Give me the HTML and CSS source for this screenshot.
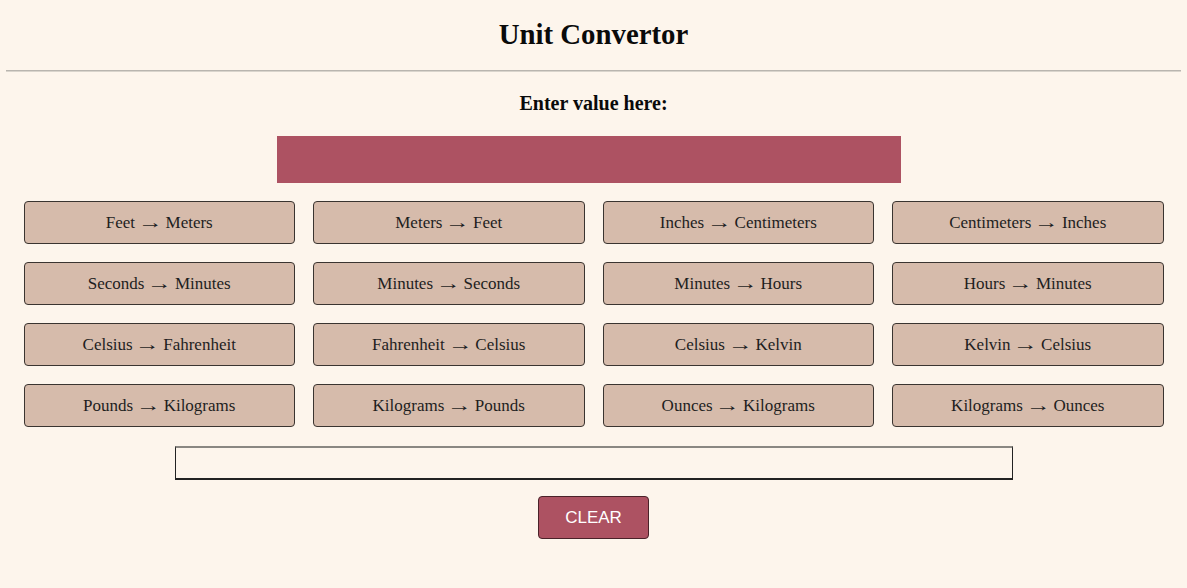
FILE: index.html
```html
<!DOCTYPE html>
<html>
<head>
<meta charset="utf-8">
<title>Unit Convertor</title>
<link rel="stylesheet" href="styles.css">
</head>
<body>
  <h1 class="title">Unit Convertor</h1>
  <hr class="divider">
  <main class="converter">
    <label class="prompt" for="value">Enter value here:</label>
    <input class="value-input" id="value" type="text">
    <div class="grid">
      <button class="conv">Feet <span class="arr">→</span> Meters</button>
      <button class="conv">Meters <span class="arr">→</span> Feet</button>
      <button class="conv">Inches <span class="arr">→</span> Centimeters</button>
      <button class="conv">Centimeters <span class="arr">→</span> Inches</button>
      <button class="conv">Seconds <span class="arr">→</span> Minutes</button>
      <button class="conv">Minutes <span class="arr">→</span> Seconds</button>
      <button class="conv">Minutes <span class="arr">→</span> Hours</button>
      <button class="conv">Hours <span class="arr">→</span> Minutes</button>
      <button class="conv">Celsius <span class="arr">→</span> Fahrenheit</button>
      <button class="conv">Fahrenheit <span class="arr">→</span> Celsius</button>
      <button class="conv">Celsius <span class="arr">→</span> Kelvin</button>
      <button class="conv">Kelvin <span class="arr">→</span> Celsius</button>
      <button class="conv">Pounds <span class="arr">→</span> Kilograms</button>
      <button class="conv">Kilograms <span class="arr">→</span> Pounds</button>
      <button class="conv">Ounces <span class="arr">→</span> Kilograms</button>
      <button class="conv">Kilograms <span class="arr">→</span> Ounces</button>
    </div>
    <div class="output"></div>
    <button class="clear">CLEAR</button>
  </main>
</body>
</html>
```
FILE: styles.css
```css
html, body {
  margin: 0;
  background: #fdf5ec;
}
body {
  padding: 0 6px;
  font-family: "Liberation Serif", "Times New Roman", serif;
  color: #0a0a0a;
}
.title {
  margin: 18px 0 20px;
  font-size: 28.8px;
  line-height: 32px;
  font-weight: bold;
  text-align: center;
}
.divider {
  margin: 0;
  height: 0;
  border: none;
  border-top: 1px solid #b9b5af;
  border-bottom: 1px solid #d9d4cc;
}
.converter {
  display: flex;
  flex-direction: column;
  align-items: center;
}
.prompt {
  margin-top: 20px;
  font-size: 20px;
  line-height: 23px;
  font-weight: bold;
}
.value-input {
  margin-top: 21px;
  margin-right: 9px;
  width: 624px;
  height: 47px;
  box-sizing: border-box;
  border: none;
  background: #ad5262;
  padding: 0;
}
.grid {
  margin-top: 18px;
  width: 1140px;
  display: grid;
  grid-template-columns: repeat(4, 1fr);
  column-gap: 18px;
  row-gap: 18px;
}
.conv {
  height: 43px;
  box-sizing: border-box;
  background: #d6bbab;
  border: 1px solid #3a3430;
  border-radius: 4px;
  font-family: "Liberation Serif", "Times New Roman", serif;
  font-size: 17px;
  color: #1e1e1e;
  padding: 0;
}
.arr {
  display: inline-block;
  transform: scaleX(1.45);
  margin: 0 2.5px;
}
.output {
  margin-top: 19px;
  width: 838px;
  height: 34px;
  box-sizing: border-box;
  border-top: 2px solid #8a8782;
  border-left: 1px solid #222;
  border-right: 1px solid #222;
  border-bottom: 2px solid #222;
}
.clear {
  margin-top: 16px;
  width: 111px;
  height: 43px;
  box-sizing: border-box;
  background: #ad5262;
  border: 1px solid #4a2229;
  border-radius: 4px;
  color: #fff;
  font-family: "Liberation Sans", Arial, sans-serif;
  font-size: 17px;
  padding: 0;
}
```
